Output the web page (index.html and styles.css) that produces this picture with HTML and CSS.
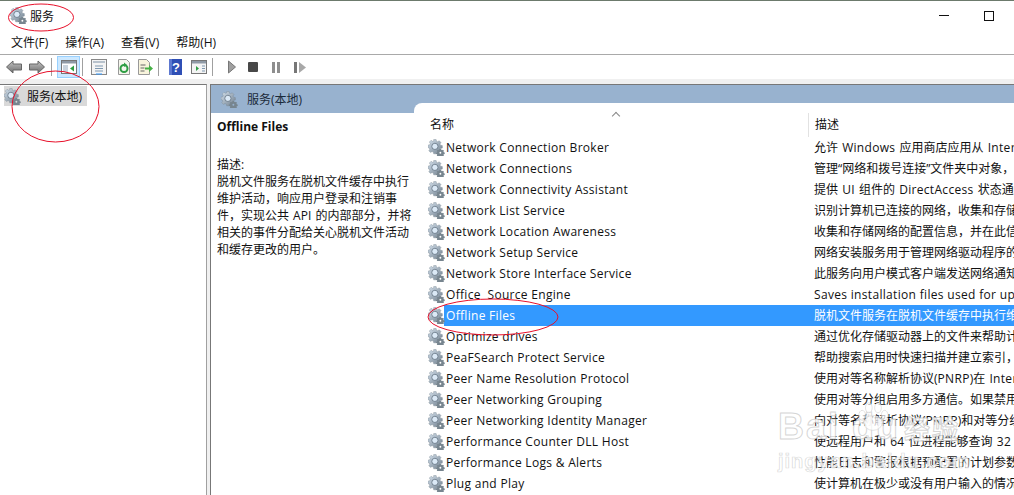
FILE: index.html
```html
<!DOCTYPE html>
<html lang="zh-CN">
<head>
<meta charset="utf-8">
<title>服务</title>
<link rel="stylesheet" href="styles.css">
</head>
<body>
<svg class="defs" width="0" height="0" aria-hidden="true">
  <defs>
    <linearGradient id="gearfill" x1="0" y1="0" x2="1" y2="1">
      <stop offset="0" stop-color="#d5e2ee"/>
      <stop offset="1" stop-color="#6f7e8c"/>
    </linearGradient>
    <linearGradient id="arrowfill" x1="0" y1="0" x2="0" y2="1">
      <stop offset="0" stop-color="#c4c4c4"/>
      <stop offset="1" stop-color="#6e6e6e"/>
    </linearGradient>
    <symbol id="gear" viewBox="0 0 18 18">
      <path fill="url(#gearfill)" stroke="#75838f" stroke-width=".4" d="M6 .5h2.600l.4 1.900 1.300.5 1.600-1 1.800 1.800-1 1.600.6 1.300 1.900.4v2.600l-1.900.4-.6 1.300.6 1-1.800 1.600-1.200-.7-1.300.6-.4 1.900H6l-.4-1.900-1.300-.6-1.600 1-1.800-1.800 1-1.600-.6-1.300L0 9.100V6.500l1.900-.4.5-1.300-1-1.600L3.200 1.400l1.600 1 1.300-.5z"/>
      <circle cx="7.300" cy="7.800" r="3.300" fill="#dbe9f6" stroke="#5e6e7d" stroke-width=".8"/>
      <path fill-rule="evenodd" fill="#77858f" d="M12.300 10.500h1.600l.2 1 .8.3.9-.5 1.100 1.100-.5.900.3.800 1 .2v1.600l-1 .2-.3.800.5.900-1.100 1.100-.9-.5-.8.300-.2.800h-1.600l-.2-.8-.8-.3-.9.5-1.100-1.100.5-.9-.3-.8-1-.2v-1.600l1-.2.3-.8-.5-.9 1.100-1.100.9.500.8-.3zM13.100 13.600a1 1 0 1 0 0 2 1 1 0 0 0 0-2z"/>
    </symbol>
  </defs>
</svg>

<div class="window">
  <header class="titlebar">
    <svg class="gear"><use href="#gear"/></svg>
    <span class="title">服务</span>
    <div class="winbtns">
      <span class="minimize"></span>
      <span class="maximize"></span>
    </div>
  </header>

  <nav class="menubar">
    <span>文件(F)</span><span>操作(A)</span><span>查看(V)</span><span>帮助(H)</span>
  </nav>

  <div class="toolbar">
    <svg class="tool tool-wide" viewBox="0 0 16 14"><path d="M.5 7 7 1v3h8.500v6H7v3z" fill="url(#arrowfill)" stroke="#666"/></svg>
    <svg class="tool tool-wide" viewBox="0 0 16 14"><path d="M15.500 7 9 1v3H.5v6H9v3z" fill="url(#arrowfill)" stroke="#666"/></svg>
    <i class="sep"></i>
    <span class="tool-active">
      <svg class="tool" viewBox="0 0 16 16"><rect x=".5" y="1.500" width="15" height="13" fill="#fff" stroke="#777"/><rect x="1" y="2" width="14" height="2.500" fill="#8f9aa6"/><rect x="2" y="6" width="5" height="7" fill="#c9d3dd"/><path d="M13 6.500v6l-4-3z" fill="#2f9e44"/></svg>
    </span>
    <i class="sep"></i>
    <svg class="tool tool-doc" viewBox="0 0 16 16"><rect x=".5" y=".5" width="15" height="15" fill="#f4f4f4" stroke="#888"/><rect x="2" y="2" width="12" height="2" fill="#b8c2cc"/><path d="M4 7h8M4 9.500h8M4 12h8" stroke="#7f98b0"/><rect x="5" y="14.500" width="6" height="1" fill="#39f"/></svg>
    <svg class="tool tool-refresh" viewBox="0 0 16 16"><path d="M2.500.5h8l3 3v12h-11z" fill="#f6f6ee" stroke="#999"/><circle cx="8" cy="9.500" r="3.500" fill="none" stroke="#2f9e44" stroke-width="2"/><path d="M8 3.500l3 2.500-3 2z" fill="#2f9e44"/></svg>
    <svg class="tool tool-export" viewBox="0 0 16 16"><path d="M1.500.5h8l3 3v12h-11z" fill="#f8f4dc" stroke="#999"/><path d="M3.500 6h5M3.500 9h4M3.500 12h4" stroke="#666"/><path d="M8 8.500h4V6l4 3.500-4 3.500v-2.500H8z" fill="#45b045"/></svg>
    <i class="sep"></i>
    <svg class="tool tool-help" viewBox="0 0 13 16"><rect width="13" height="16" fill="#2f4fb5"/><rect x="0" y="0" width="3" height="16" fill="#5d78d0"/><text x="7" y="13" class="help-mark">?</text></svg>
    <svg class="tool tool-panel" viewBox="0 0 16 16"><rect x=".5" y="1.500" width="15" height="13" fill="#f4f4f4" stroke="#777"/><rect x="1" y="2" width="14" height="2.500" fill="#8f9aa6"/><path d="M5 7v5l3-2.500z" fill="#2f9e44"/><path d="M11 7h3M11 9.500h3M11 12h3" stroke="#7f98b0"/></svg>
    <i class="sep"></i>
    <svg class="tool tool-play" viewBox="0 0 8 14"><path d="M.5 1 7.500 7 .5 13z" fill="#a0a0a0" stroke="#777"/></svg>
    <svg class="tool tool-stop" viewBox="0 0 10 10"><rect width="10" height="10" rx="1" fill="#484848"/></svg>
    <svg class="tool tool-pause" viewBox="0 0 8 11"><path d="M0 0h3v11H0zM5 0h3v11H5z" fill="#8e8e8e"/></svg>
    <svg class="tool tool-resume" viewBox="0 0 12 11"><path d="M0 0h3v11H0z" fill="#777"/><path d="M5 0l7 5.500L5 11z" fill="#a8a8a8"/></svg>
  </div>

  <div class="strip"></div>

  <main class="panes">
    <aside class="tree">
      <div class="tree-item">
        <svg class="gear"><use href="#gear"/></svg>
        <span>服务(本地)</span>
      </div>
    </aside>

    <section class="content">
      <div class="content-head">
        <svg class="gear head-gear"><use href="#gear"/></svg>
        <span>服务(本地)</span>
      </div>
      <div class="content-body">
        <div class="details">
          <h2>Offline Files</h2>
          <p>描述:<br>脱机文件服务在脱机文件缓存中执行<br>维护活动，响应用户登录和注销事<br>件，实现公共 API 的内部部分，并将<br>相关的事件分配给关心脱机文件活动<br>和缓存更改的用户。</p>
        </div>
        <div class="list">
          <div class="list-head">
            <span class="col-name">名称<i class="sort"></i></span>
            <span class="col-desc">描述</span>
          </div>
          <div class="row"><svg class="gear"><use href="#gear"/></svg><span class="name">Network Connection Broker</span><span class="desc">允许 <b>Windows</b> 应用商店应用从 <b>Internet</b> 接收通知</span></div>
          <div class="row"><svg class="gear"><use href="#gear"/></svg><span class="name">Network Connections</span><span class="desc">管理“网络和拨号连接”文件夹中对象，在其中</span></div>
          <div class="row"><svg class="gear"><use href="#gear"/></svg><span class="name">Network Connectivity Assistant</span><span class="desc">提供 <b>UI</b> 组件的 <b>DirectAccess</b> 状态通知</span></div>
          <div class="row"><svg class="gear"><use href="#gear"/></svg><span class="name">Network List Service</span><span class="desc">识别计算机已连接的网络，收集和存储</span></div>
          <div class="row"><svg class="gear"><use href="#gear"/></svg><span class="name">Network Location Awareness</span><span class="desc">收集和存储网络的配置信息，并在此信息</span></div>
          <div class="row"><svg class="gear"><use href="#gear"/></svg><span class="name">Network Setup Service</span><span class="desc">网络安装服务用于管理网络驱动程序的</span></div>
          <div class="row"><svg class="gear"><use href="#gear"/></svg><span class="name">Network Store Interface Service</span><span class="desc">此服务向用户模式客户端发送网络通知</span></div>
          <div class="row"><svg class="gear"><use href="#gear"/></svg><span class="name">Office  Source Engine</span><span class="desc"><b>Saves installation files used for updates</b></span></div>
          <div class="row selected"><svg class="gear"><use href="#gear"/></svg><span class="name">Offline Files</span><span class="desc">脱机文件服务在脱机文件缓存中执行维护</span></div>
          <div class="row"><svg class="gear"><use href="#gear"/></svg><span class="name">Optimize drives</span><span class="desc">通过优化存储驱动器上的文件来帮助计算机</span></div>
          <div class="row"><svg class="gear"><use href="#gear"/></svg><span class="name">PeaFSearch Protect Service</span><span class="desc">帮助搜索启用时快速扫描并建立索引，</span></div>
          <div class="row"><svg class="gear"><use href="#gear"/></svg><span class="name">Peer Name Resolution Protocol</span><span class="desc">使用对等名称解析协议(<b>PNRP</b>)在 <b>Internet</b></span></div>
          <div class="row"><svg class="gear"><use href="#gear"/></svg><span class="name">Peer Networking Grouping</span><span class="desc">使用对等分组启用多方通信。如果禁用</span></div>
          <div class="row"><svg class="gear"><use href="#gear"/></svg><span class="name">Peer Networking Identity Manager</span><span class="desc">向对等名称解析协议(<b>PNRP</b>)和对等分组</span></div>
          <div class="row"><svg class="gear"><use href="#gear"/></svg><span class="name">Performance Counter DLL Host</span><span class="desc">使远程用户和 <b>64</b> 位进程能够查询 <b>32</b> 位</span></div>
          <div class="row"><svg class="gear"><use href="#gear"/></svg><span class="name">Performance Logs &amp; Alerts</span><span class="desc">性能日志和警报根据预配置的计划参数</span></div>
          <div class="row"><svg class="gear"><use href="#gear"/></svg><span class="name">Plug and Play</span><span class="desc">使计算机在极少或没有用户输入的情况下</span></div>
        </div>
      </div>
    </section>
  </main>
</div>

<svg class="annotations" viewBox="0 0 1014 495" aria-hidden="true">
  <ellipse cx="41" cy="17.500" rx="32.500" ry="13.500"/>
  <ellipse cx="55.500" cy="106.500" rx="43.500" ry="35.500"/>
  <ellipse cx="493" cy="317" rx="65" ry="18"/>
</svg>

<div class="watermark" aria-hidden="true">
  <svg class="paw" viewBox="0 0 40 36">
    <ellipse cx="20" cy="25" rx="11" ry="9"/>
    <ellipse cx="7" cy="16" rx="4" ry="6"/>
    <ellipse cx="15" cy="7" rx="4" ry="6"/>
    <ellipse cx="26" cy="7" rx="4" ry="6"/>
    <ellipse cx="34" cy="16" rx="4" ry="6"/>
  </svg>
  <div class="wm-main">Bai<span class="wm-gap"></span>du<span class="wm-cjk">经验</span></div>
  <div class="wm-sub">jingyan.baidu.com</div>
</div>
</body>
</html>
```

FILE: styles.css
```css
* { box-sizing: border-box; }

html, body {
  margin: 0;
  height: 495px;
  overflow: hidden;
  background: #fff;
}

body {
  position: relative;
  color: #111;
  font: 12px/17px "Open Sans", "Noto Sans CJK SC", sans-serif;
}

.defs { position: absolute; }

.window {
  display: flex;
  flex-direction: column;
  height: 495px;
  border-top: 1px solid #6c7a6c;
}

.gear {
  width: 17px;
  height: 17px;
  flex: none;
}

.titlebar {
  display: flex;
  align-items: center;
  height: 29px;
  padding-left: 10px;
}

.title {
  margin-left: 3px;
  padding-top: 1px;
  font-size: 12px;
}

.winbtns {
  margin-left: auto;
  display: flex;
  align-items: center;
  height: 29px;
}

.minimize {
  width: 10px;
  height: 1px;
  margin-right: 35px;
  background: #111;
}

.maximize {
  width: 10px;
  height: 10px;
  margin-right: 20px;
  border: 1px solid #111;
}

.menubar {
  display: flex;
  gap: 17px;
  align-items: center;
  height: 25px;
  padding-left: 11px;
  padding-top: 1px;
  border-bottom: 1px solid #a9a9a9;
}

.toolbar {
  display: flex;
  align-items: center;
  height: 24px;
  padding-left: 6px;
}

.tool { display: block; flex: none; width: 16px; height: 16px; }
.tool-wide { width: 16px; height: 14px; margin-right: 7px; }
.tool-wide + .sep { margin-left: -1px; }

.sep {
  display: block;
  flex: none;
  width: 1px;
  height: 18px;
  margin-right: 5px;
  background: #a0a0a0;
}

.tool-active {
  display: flex;
  align-items: center;
  justify-content: center;
  width: 23px;
  height: 22px;
  margin-right: 2px;
  background: #cce8ff;
  border: 1px solid #99d1ff;
}

.tool-doc { margin-left: 3px; margin-right: 9px; }
.tool-refresh { margin-right: 5px; width: 16px; }
.tool-export { margin-right: 5px; }
.tool-help { width: 13px; margin-left: 5px; margin-right: 9px; }
.tool-panel { margin-right: 5px; }
.tool-play { width: 8px; height: 14px; margin-left: 10px; margin-right: 12px; }
.tool-stop { width: 10px; height: 10px; margin-right: 14px; }
.tool-pause { width: 8px; height: 11px; margin-right: 14px; }
.tool-resume { width: 12px; height: 11px; }

.help-mark {
  fill: #fff;
  font: bold 13px "Liberation Sans", sans-serif;
  text-anchor: middle;
}

.strip {
  height: 5px;
  background: #f0f0f0;
}

.panes {
  display: flex;
  flex: 1;
  min-height: 0;
  background: #f0f0f0;
}

.tree {
  width: 207px;
  flex: none;
  padding: 1px 0 0 4px;
  background: #fff;
  border-top: 1px solid #777;
  border-right: 1px solid #a0a0a0;
}

.tree-item {
  display: flex;
  align-items: center;
  gap: 6px;
  width: 83px;
  height: 20px;
  font-size: 12px;
  background: #d9d9d9;
}

.content {
  flex: 1;
  min-width: 0;
  margin-left: 3px;
  display: flex;
  flex-direction: column;
  overflow: hidden;
  background: #fff;
  border-top: 1px solid #777;
  border-left: 1px solid #777;
}

.content-head {
  display: flex;
  align-items: center;
  height: 28px;
  padding: 0 0 0 10px;
  background: #98b2cf;
  color: #1b2a3a;
}

.head-gear { margin-right: 9px; }

.content-body {
  flex: 1;
  min-height: 0;
  display: flex;
}

.details {
  width: 203px;
  flex: none;
  padding: 4px 0 0 6px;
}

.details h2 {
  margin: 0 0 19px;
  font: bold 12px/20px "Open Sans", "Noto Sans CJK SC", sans-serif;
}

.details p {
  margin: 0;
  white-space: nowrap;
  word-spacing: 1px;
}

.list {
  position: relative;
  flex: 1;
  min-width: 0;
  margin-top: -10px;
  background: #fff;
  border-top-left-radius: 8px;
}

.list-head {
  display: flex;
  align-items: flex-start;
  height: 34px;
  padding-top: 10px;
}

.col-name {
  position: relative;
  width: 394px;
  height: 24px;
  line-height: 24px;
  padding-left: 16px;
}

.sort {
  position: absolute;
  left: 199px;
  top: 0;
  width: 6px;
  height: 6px;
  border-left: 1px solid #888;
  border-top: 1px solid #888;
  transform: rotate(45deg);
}

.col-desc {
  height: 24px;
  line-height: 24px;
  padding-left: 6px;
  border-left: 1px solid #e2e2e2;
}

.row {
  display: flex;
  align-items: center;
  height: 21px;
  padding-left: 14px;
  white-space: nowrap;
}

.row .name {
  width: 361px;
  height: 21px;
  line-height: 21px;
  padding-left: 1px;
  margin-right: 8px;
  white-space: pre;
  flex: none;
  letter-spacing: .3px;
}

.row .desc {
  flex: 1;
  min-width: 0;
  overflow: hidden;
  word-spacing: 1px;
}

.row .desc b {
  font-weight: 400;
  letter-spacing: .32px;
  word-spacing: 0;
}

.row.selected {
  background: linear-gradient(to right, #fff 30px, #3399ff 30px);
}

.row.selected .name,
.row.selected .desc { color: #fff; }

.annotations {
  position: absolute;
  left: 0;
  top: 0;
  width: 1014px;
  height: 495px;
  pointer-events: none;
}

.annotations ellipse {
  fill: none;
  stroke: #e8102a;
  stroke-width: 1;
}

.watermark {
  position: absolute;
  left: 778px;
  top: 405px;
  width: 236px;
  color: rgba(255, 255, 255, .82);
  pointer-events: none;
}

.paw {
  position: absolute;
  left: 78px;
  top: -3px;
  width: 34px;
  height: 30px;
  fill: rgba(255, 255, 255, .7);
  stroke: rgba(190, 190, 190, .5);
}

.wm-main {
  font: bold 36px/44px "Liberation Sans", sans-serif;
  letter-spacing: 2px;
  white-space: nowrap;
  -webkit-text-stroke: 1px rgba(185, 185, 185, .6);
}

.wm-gap { display: inline-block; width: 12px; }

.wm-cjk {
  margin-left: 4px;
  font: bold 26px "Noto Sans CJK SC", sans-serif;
}

.wm-sub {
  margin-top: 0;
  font: bold 20px/24px "Liberation Sans", sans-serif;
  letter-spacing: 1px;
  white-space: nowrap;
  -webkit-text-stroke: .7px rgba(185, 185, 185, .55);
}
```
